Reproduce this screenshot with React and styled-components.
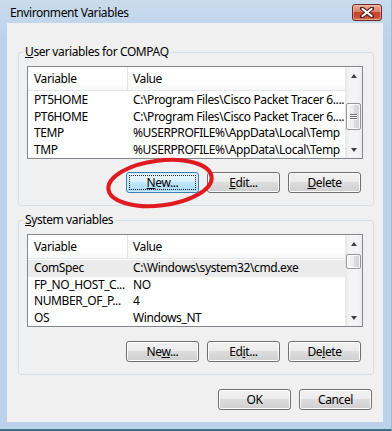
import React from "react";
import styled, { createGlobalStyle } from "styled-components";

const GlobalStyle = createGlobalStyle`
  html, body {
    margin: 0;
    padding: 0;
    background: #ffffff;
  }
  body {
    font-family: "Noto Sans", "Open Sans", sans-serif;
    font-size: 12px;
    letter-spacing: -0.4px;
    color: #000;
  }
`;

// the whole dialog with its blue aero frame
const Window = styled.div`
  position: relative;
  width: 392px;
  height: 431px;
  box-sizing: border-box;
  display: flex;
  flex-direction: column;
  background: linear-gradient(#cbdbee, #bbd2ea 40px, #bbd2ea);
  border-right: 1px solid #9fbad9;
  border-bottom: 2px solid #3f6f8a;
`;

const TitleBar = styled.div`
  height: 23px;
  display: flex;
  align-items: center;
  justify-content: space-between;
  padding: 0 9px 0 10px;
  flex-shrink: 0;
`;

const Title = styled.div`
  font-size: 12px;
  color: #000;
  line-height: 16px;
  margin-top: 3px;
`;

const CloseButton = styled.div`
  width: 30px;
  height: 17px;
  margin-top: 1px;
  box-sizing: border-box;
  border: 1px solid #6b2a26;
  border-radius: 3px;
  display: flex;
  align-items: center;
  justify-content: center;
  background: linear-gradient(#e9a99a 0%, #d9826d 45%, #c6442e 50%, #c94a33 80%, #dc7b5d 100%);
  box-shadow: inset 0 0 0 1px rgba(255, 220, 210, 0.45);
`;

const Client = styled.div`
  flex: 1;
  margin: 0 8px 7px 7px;
  padding: 0 9px 0 11px;
  background: #f0f0f0;
  display: flex;
  flex-direction: column;
`;

const Group = styled.fieldset`
  margin: ${(p) => p.$top}px 0 0 0;
  padding: 7px 10px 12px 8px;
  border: 1px solid #d5dfe5;
  border-radius: 3px;
  min-width: 0;
`;

const Legend = styled.legend`
  padding: 0 2px;
  margin-left: -4px;
  line-height: 14px;
  font-size: 12px;
`;

const U = styled.span`
  text-decoration: underline;
  text-underline-offset: 1px;
`;

const List = styled.div`
  height: 93px;
  box-sizing: border-box;
  border: 1px solid #828790;
  background: #fff;
  display: flex;
  overflow: hidden;
`;

const ListBody = styled.div`
  flex: 1;
  min-width: 0;
  display: flex;
  flex-direction: column;
`;

const Header = styled.div`
  height: 24px;
  box-sizing: border-box;
  display: grid;
  grid-template-columns: 100px 1fr;
  border-bottom: 1px solid #e3e5e8;
  background: linear-gradient(#ffffff, #ffffff 70%, #f7f8f9);
  flex-shrink: 0;
`;

const HeaderCell = styled.div`
  line-height: 23px;
  padding-left: ${(p) => (p.$first ? 6 : 5)}px;
  border-right: ${(p) => (p.$first ? "1px solid #e3e5e8" : "none")};
  white-space: nowrap;
`;

const Row = styled.div`
  height: 16.5px;
  display: grid;
  grid-template-columns: 100px 1fr;
  background: ${(p) => (p.$selected ? "#ebebeb" : "transparent")};
  flex-shrink: 0;
  margin-top: ${(p) => (p.$firstRow ? 1 : 0)}px;
`;

const Cell = styled.div`
  line-height: 16.5px;
  padding-left: ${(p) => (p.$first ? 6 : 5)}px;
  white-space: nowrap;
`;

const ScrollBar = styled.div`
  width: 17px;
  flex-shrink: 0;
  display: flex;
  flex-direction: column;
  background: linear-gradient(to right, #e7e7e7, #f4f4f4 25%, #f4f4f4 75%, #ececec);
`;

const ArrowBox = styled.div`
  height: 17px;
  flex-shrink: 0;
  display: flex;
  align-items: center;
  justify-content: center;
`;

const Arrow = styled.div`
  width: 0;
  height: 0;
  border-left: 3.5px solid transparent;
  border-right: 3.5px solid transparent;
  ${(p) =>
    p.$up
      ? "border-bottom: 4px solid #3e3e3e;"
      : "border-top: 4px solid #3e3e3e;"}
`;

const Track = styled.div`
  flex: 1;
  display: flex;
  flex-direction: column;
  align-items: center;
`;

const Thumb = styled.div`
  margin-top: ${(p) => p.$offset}px;
  width: 15px;
  height: ${(p) => p.$size}px;
  box-sizing: border-box;
  border: 1px solid #979797;
  border-radius: 2px;
  background: linear-gradient(to right, #f6f6f6, #ececec 50%, #dcdcdc 55%, #d2d2d2);
  box-shadow: inset 0 0 0 1px rgba(255, 255, 255, 0.8);
  display: flex;
  flex-direction: column;
  align-items: center;
  justify-content: center;
  gap: 1px;
`;

const Grip = styled.div`
  width: 7px;
  height: 1px;
  background: #6f6f6f;
  box-shadow: 0 1px 0 #ffffff;
`;

const ButtonRow = styled.div`
  display: flex;
  justify-content: flex-end;
  gap: 8px;
  margin-top: ${(p) => p.$top}px;
  padding-right: 2px;
`;

const Button = styled.div`
  width: 73px;
  height: 21px;
  box-sizing: border-box;
  border: 1px solid ${(p) => (p.$focused ? "#3c7fb1" : "#707070")};
  border-radius: 3px;
  display: flex;
  align-items: center;
  justify-content: center;
  font-size: 12px;
  line-height: 15px;
  background: ${(p) =>
    p.$focused
      ? "linear-gradient(#eaf6fd 0%, #d9f0fc 50%, #bee6fd 50%, #a7d9f5 100%)"
      : "linear-gradient(#f2f2f2 0%, #ebebeb 50%, #dddddd 50%, #cfcfcf 100%)"};
  box-shadow: inset 0 0 0 1px ${(p) => (p.$focused ? "#cde9f8" : "#fcfcfc")};
  outline: ${(p) => (p.$focused ? "1px dotted #222" : "none")};
  outline-offset: -4px;
`;

const Annotation = styled.svg`
  position: absolute;
  left: 0;
  top: 0;
  pointer-events: none;
`;

const userVars = [
  ["PT5HOME", "C:\\Program Files\\Cisco Packet Tracer 6...."],
  ["PT6HOME", "C:\\Program Files\\Cisco Packet Tracer 6...."],
  ["TEMP", "%USERPROFILE%\\AppData\\Local\\Temp"],
  ["TMP", "%USERPROFILE%\\AppData\\Local\\Temp"],
];

const systemVars = [
  ["ComSpec", "C:\\Windows\\system32\\cmd.exe"],
  ["FP_NO_HOST_C...", "NO"],
  ["NUMBER_OF_P...", "4"],
  ["OS", "Windows_NT"],
];

function VarList({ rows, thumbOffset, thumbSize, grip, selected }) {
  return (
    <List>
      <ListBody>
        <Header>
          <HeaderCell $first>Variable</HeaderCell>
          <HeaderCell>Value</HeaderCell>
        </Header>
        {rows.map(([name, value], i) => (
          <Row key={name} $firstRow={i === 0} $selected={i === selected}>
            <Cell $first>{name}</Cell>
            <Cell>{value}</Cell>
          </Row>
        ))}
      </ListBody>
      <ScrollBar>
        <ArrowBox>
          <Arrow $up />
        </ArrowBox>
        <Track>
          <Thumb $offset={thumbOffset} $size={thumbSize}>
            {grip && (
              <>
                <Grip />
                <Grip />
                <Grip />
              </>
            )}
          </Thumb>
        </Track>
        <ArrowBox>
          <Arrow />
        </ArrowBox>
      </ScrollBar>
    </List>
  );
}

function App() {
  return (
    <>
      <GlobalStyle />
      <Window>
        <TitleBar>
          <Title>Environment Variables</Title>
          <CloseButton>
            <svg width="14" height="11" viewBox="0 0 14 11">
              <path
                d="M2 1.5 L12 9.5 M12 1.5 L2 9.5"
                stroke="#4a1a16"
                strokeWidth="4"
                strokeLinecap="round"
              />
              <path
                d="M2.5 2 L11.5 9 M11.5 2 L2.5 9"
                stroke="#ffffff"
                strokeWidth="2.2"
                strokeLinecap="round"
              />
            </svg>
          </CloseButton>
        </TitleBar>
        <Client>
          <Group $top={22}>
            <Legend>
              <U>U</U>ser variables for COMPAQ
            </Legend>
            <VarList rows={userVars} thumbOffset={19} thumbSize={27} grip />
            <ButtonRow $top={13}>
              <Button $focused>
                <span>
                  <U>N</U>ew...
                </span>
              </Button>
              <Button>
                <span>
                  <U>E</U>dit...
                </span>
              </Button>
              <Button>
                <span>
                  <U>D</U>elete
                </span>
              </Button>
            </ButtonRow>
          </Group>
          <Group $top={7}>
            <Legend>
              <U>S</U>ystem variables
            </Legend>
            <VarList rows={systemVars} thumbOffset={2} thumbSize={15} selected={0} />
            <ButtonRow $top={14}>
              <Button>
                <span>
                  Ne<U>w</U>...
                </span>
              </Button>
              <Button>
                <span>
                  Ed<U>i</U>t...
                </span>
              </Button>
              <Button>
                <span>
                  De<U>l</U>ete
                </span>
              </Button>
            </ButtonRow>
          </Group>
          <ButtonRow $top={14}>
            <Button>OK</Button>
            <Button>Cancel</Button>
          </ButtonRow>
        </Client>
        <Annotation width="392" height="431">
          <ellipse
            cx="160"
            cy="183"
            rx="52"
            ry="22.5"
            transform="rotate(-7 160 183)"
            fill="none"
            stroke="#e01a22"
            strokeWidth="4"
          />
        </Annotation>
      </Window>
    </>
  );
}

export default App;
